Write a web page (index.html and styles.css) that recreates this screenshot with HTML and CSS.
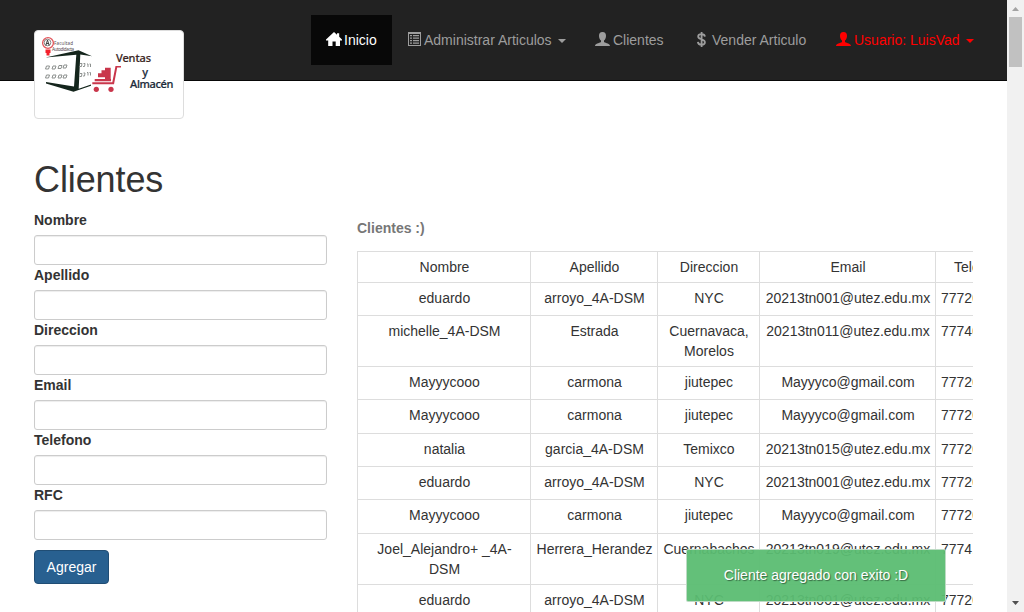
FILE: index.html
```html
<!DOCTYPE html>
<html lang="es">
<head>
<meta charset="utf-8">
<title>Clientes</title>
<link rel="stylesheet" href="styles.css">
</head>
<body>
<div class="viewport">
<div class="page">
<header class="navbar">
  <a class="brand" href="#">
    <svg width="148" height="87" viewBox="35 31 148 87">
      <circle cx="48" cy="43" r="5.400" fill="none" stroke="#e2555b" stroke-width="1.300"/>
      <circle cx="47.500" cy="42.500" r="3.300" fill="none" stroke="#555" stroke-width=".7"/>
      <path d="M45.500 49.500h5v3.500h-5zM46.500 53h3v2.500h-3z" fill="#f3202b"/>
      <path d="M45.800 45.500l1.700-5.500 1.700 5.500M46.300 43.500h2.500" fill="none" stroke="#333" stroke-width=".9"/>
      <text class="logo-small" x="54" y="44.500" textLength="19">Facultad</text>
      <text class="logo-small" x="52" y="51" textLength="22">Autodidacta</text>
      <path d="M45.500 57.500L78.500 50.300 92 56.300 80.300 54.500 78.700 88.700 91 84.500V85.800L73.500 91.700 46 83.500V82L74 86.500 76.300 54.800z" fill="#14251c"/>
      <g fill="none" stroke="#8d918f" stroke-width="1">
        <path d="M46.500 66h3l-1 3h-3zM53 66h3l-1 3h-3zM59 65.500h3l-1 3h-3zM64 65h3l-1 3h-3zM46.500 75h3l-1 3h-3zM53 75h3l-1 3h-3zM59 75h3l-1 3h-3zM64 75h3l-1 3h-3z"/>
        <path d="M80 63.500h2l-.5 3h-2M83.500 63.500h1.500l-.5 3h-1.500M87 64h1v3M89.500 64h1v3M80 73.500h2l-.5 3h-2M83.500 73h1.500l-.5 3h-1.500M87 72.500h1v3M89.500 72.500h1v3"/>
      </g>
      <g fill="#c9364b">
        <path d="M98 73.300h3.500v-3h3.500v-2.500h5.700V79H111v2.300H94.700V79H105v-1.700h-7z"/>
        <path d="M121 66v1.500h-3.800L114 84.300H92.300v-2h20l3.200-16.300z"/>
        <circle cx="96.300" cy="89.300" r="2.600"/><circle cx="111" cy="89.300" r="2.600"/>
      </g>
      <text class="logo-text logo-brown" x="116" y="62.200" textLength="35">Ventas</text>
      <text class="logo-text" x="142.300" y="75.500">y</text>
      <text class="logo-text" x="130" y="87.500" textLength="43.500">Almacén</text>
    </svg>
  </a>
  <nav class="menu">
    <a class="item inicio" href="#"><svg width="16" height="14" viewBox="0 0 16 14"><path d="M8 0l3 2.700V1.300h2.200v3.500L16 7.500v1h-2V14H9.700V9.500H6.500V14H2.200V8.500H0v-1z"/></svg>Inicio</a>
    <a class="item admin" href="#"><svg width="13" height="14" viewBox="0 0 13 14"><path fill-rule="evenodd" d="M0 0h13v14H0zM1 2v11h11V2zM2 3h2v1.200H2zm3 0h6v1.200H5zM2 5.500h2v1.200H2zm3 0h6v1.200H5zM2 8h2v1.200H2zm3 0h6v1.200H5zM2 10.500h2v1.200H2zm3 0h6v1.200H5z"/></svg>Administrar Articulos<i class="caret"></i></a>
    <a class="item clientes" href="#"><svg width="15" height="14" viewBox="0 0 15 14"><path d="M7.500 0C5 0 4 1.600 4 3.700c0 2 .7 3.800 2 4.900v1.500c-2 1.200-6 1.700-6 3.900h15c0-2.200-4-2.700-6-3.900V8.600c1.300-1.100 2-2.900 2-4.900C11 1.600 10 0 7.500 0z"/></svg>Clientes</a>
    <a class="item vender" href="#"><svg width="9" height="15" viewBox="0 0 9 15"><path d="M7.900 4.600C7.700 3 6.500 2.200 4.600 2.200S1.200 3 1.200 4.500c0 3.600 6.700 1.900 6.700 5.700 0 1.600-1.400 2.500-3.300 2.500S1 11.800.9 9.900M4.600 0v15" class="dollar"/></svg>Vender Articulo</a>
    <a class="item usuario" href="#"><svg width="15" height="14" viewBox="0 0 15 14"><path d="M7.500 0C5 0 4 1.600 4 3.700c0 2 .7 3.800 2 4.900v1.500c-2 1.200-6 1.700-6 3.900h15c0-2.200-4-2.700-6-3.900V8.600c1.300-1.100 2-2.900 2-4.900C11 1.600 10 0 7.500 0z"/></svg>Usuario: LuisVad<i class="caret"></i></a>
  </nav>
</header>
<main class="content">
  <h1>Clientes</h1>
  <div class="columns">
    <form class="form">
      <label>Nombre<input type="text"></label>
      <label>Apellido<input type="text"></label>
      <label>Direccion<input type="text"></label>
      <label>Email<input type="text"></label>
      <label>Telefono<input type="text"></label>
      <label>RFC<input type="text"></label>
      <button class="btn" type="button">Agregar</button>
    </form>
    <section class="list">
      <div class="caption">Clientes :)</div>
      <table>
        <colgroup><col class="c1"><col class="c2"><col class="c3"><col class="c4"><col class="c5"></colgroup>
        <tr class="head"><td>Nombre</td><td>Apellido</td><td>Direccion</td><td>Email</td><td>Telefono</td></tr>
        <tr><td>eduardo</td><td>arroyo_4A-DSM</td><td>NYC</td><td>20213tn001@utez.edu.mx</td><td>77720</td></tr>
        <tr class="tall"><td>michelle_4A-DSM</td><td>Estrada</td><td>Cuernavaca, Morelos</td><td>20213tn011@utez.edu.mx</td><td>77740</td></tr>
        <tr><td>Mayyycooo</td><td>carmona</td><td>jiutepec</td><td>Mayyyco@gmail.com</td><td>77720</td></tr>
        <tr class="round"><td>Mayyycooo</td><td>carmona</td><td>jiutepec</td><td>Mayyyco@gmail.com</td><td>77720</td></tr>
        <tr><td>natalia</td><td>garcia_4A-DSM</td><td>Temixco</td><td>20213tn015@utez.edu.mx</td><td>77720</td></tr>
        <tr><td>eduardo</td><td>arroyo_4A-DSM</td><td>NYC</td><td>20213tn001@utez.edu.mx</td><td>77720</td></tr>
        <tr class="round"><td>Mayyycooo</td><td>carmona</td><td>jiutepec</td><td>Mayyyco@gmail.com</td><td>77720</td></tr>
        <tr class="tall"><td>Joel_Alejandro+ _4A-DSM</td><td>Herrera_Herandez</td><td>Cuernabachos</td><td>20213tn019@utez.edu.mx</td><td>77741</td></tr>
        <tr><td>eduardo</td><td>arroyo_4A-DSM</td><td>NYC</td><td>20213tn001@utez.edu.mx</td><td>77720</td></tr>
      </table>
    </section>
  </div>
</main>
</div>
<div class="scrollbar">
  <svg width="17" height="17" viewBox="0 0 17 17"><path d="M5 11h7L8.500 7z" fill="#a3a3a3"/></svg>
  <div class="thumb"></div>
  <svg class="down" width="17" height="17" viewBox="0 0 17 17"><path d="M5 6h7l-3.500 4z" fill="#505050"/></svg>
</div>
<div class="toast">Cliente agregado con exito :D</div>
</div>
</body>
</html>
```
FILE: styles.css
```css
* { box-sizing: border-box; }
body {
  margin: 0;
  font: 14px/20px "Liberation Sans", Arial, sans-serif;
  color: #333;
  background: #fff;
}
.viewport { position: relative; display: flex; width: 1024px; height: 612px; overflow: hidden; }
.page { width: 1007px; height: 612px; overflow: hidden; }
.navbar {
  display: flex;
  justify-content: space-between;
  height: 81px;
  padding: 15px 18px 0 34px;
  background: #222;
  border-bottom: 1px solid #080808;
}
.brand {
  width: 150px;
  height: 89px;
  margin-top: 15px;
  background: #fff;
  border: 1px solid #ddd;
  border-radius: 4px;
}
.brand svg { display: block; }
.logo-text { font: 500 11px "Noto Sans", sans-serif; fill: #202b3a; stroke: #202b3a; stroke-width: .2; }
.logo-brown { fill: #3c2725; stroke: #3c2725; }
.logo-small { font: 4.5px "Noto Sans", sans-serif; fill: #554850; }
.menu { display: flex; height: 50px; }
.item {
  display: flex;
  align-items: center;
  height: 50px;
  padding-left: 15px;
  color: #9d9d9d;
  text-decoration: none;
  white-space: nowrap;
}
.item svg { flex: none; fill: currentColor; margin-right: 3px; margin-top: -2px; }
.inicio { width: 81px; color: #fff; background: #080808; }
.inicio svg { margin-right: 2px; }
.admin { width: 188px; padding-left: 16px; }
.clientes { width: 101px; }
.vender { width: 140px; padding-left: 16px; }
.vender svg { margin-right: 6px; }
.usuario { width: 168px; color: #f00; }
.dollar { fill: none; stroke: currentColor; stroke-width: 1.8; }
.caret { margin-left: 6px; margin-top: 2px; border: 4px solid transparent; border-top-color: currentColor; border-bottom: 0; }
.content { padding: 79px 34px 0; }
h1 { margin: 0 0 10px; font-size: 36px; font-weight: 400; line-height: 40px; letter-spacing: -.1px; }
.columns { display: flex; gap: 30px; }
.form { width: 293px; flex: none; }
.form label { display: block; font-weight: 700; }
.form input {
  display: block;
  width: 100%;
  height: 30px;
  margin-top: 5px;
  border: 1px solid #ccc;
  border-radius: 3px;
  box-shadow: inset 0 1px 1px rgba(0, 0, 0, .075);
}
.btn {
  width: 75px;
  height: 34px;
  margin-top: 10px;
  padding: 0;
  font: inherit;
  color: #fff;
  background: #286090;
  border: 1px solid #204d74;
  border-radius: 4px;
}
.list { width: 616px; flex: none; overflow: hidden; padding-top: 8px; }
.caption { height: 33px; color: #777; font-weight: 700; }
table { width: 684px; table-layout: fixed; border-collapse: collapse; }
td { height: 33px; padding: 5px 0 5px 1px; border: 1px solid #ddd; text-align: center; vertical-align: top; }
td:first-child { padding: 5px 10px 5px 11px; }
td:last-child { padding-left: 5px; text-align: left; }
.head td { height: 31px; }
.head td:last-child { padding-left: 18px; }
.tall td { height: 51px; }
.round td { height: 34px; }
.c1 { width: 173px; }
.c2 { width: 127px; }
.c3 { width: 102px; }
.c4 { width: 176px; }
.c5 { width: 106px; }
.scrollbar { display: flex; flex-direction: column; width: 17px; background: #f1f1f1; }
.thumb { height: 50px; margin: 0 2px; background: #c1c1c1; }
.down { margin-top: auto; }
.toast {
  position: absolute;
  left: 686px;
  top: 549px;
  width: 260px;
  height: 53px;
  line-height: 51px;
  text-align: center;
  color: #fff;
  background: rgba(91, 189, 114, .95);
  border: 1px solid rgba(200, 222, 205, .9);
  border-radius: 2px;
  text-shadow: 1px 1px 1px rgba(0, 0, 0, .45);
}
```
